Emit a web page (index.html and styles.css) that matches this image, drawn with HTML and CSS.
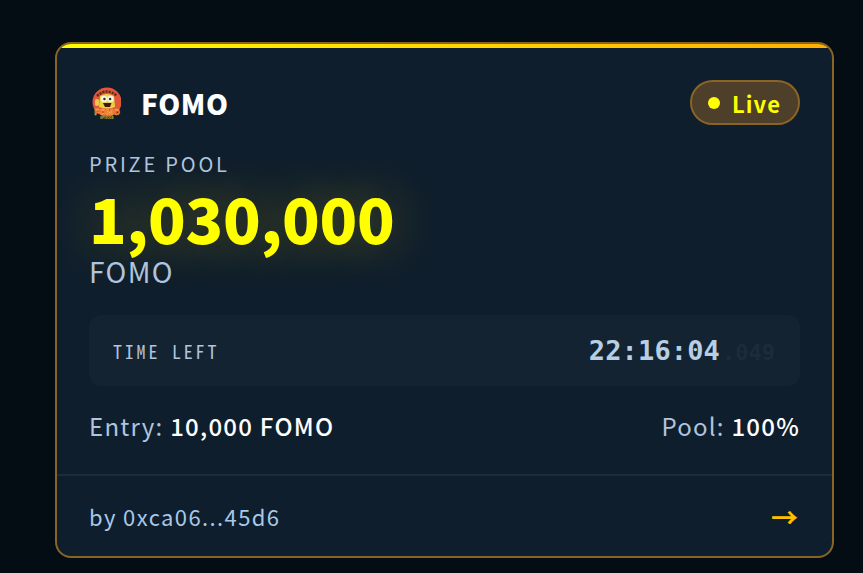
FILE: index.html
```html
<!DOCTYPE html>
<html lang="en">
<head>
<meta charset="utf-8">
<title>FOMO</title>
<link rel="stylesheet" href="styles.css">
</head>
<body>
<main class="card">
  <div class="accent"></div>
  <div class="content">
    <header class="head">
      <div class="brand">
        <svg class="logo" viewBox="-2 -1 32 32" aria-hidden="true">
          <circle cx="16" cy="14" r="14.5" fill="#e0573a"/>
          <path d="M6 8 Q16 -1 26 8" fill="none" stroke="#5e2a1a" stroke-width="2.4" stroke-dasharray="2.2 1"/>
          <path d="M9 8 Q16 4 23 8 L24 19 Q16 22 8 19 Z" fill="#e8d23e"/>
          <rect x="4" y="11" width="4" height="7" rx="1.8" fill="#f0c84c"/>
          <circle cx="13" cy="11" r="3.3" fill="#f5f3e2"/>
          <circle cx="19.5" cy="11" r="3.3" fill="#f5f3e2"/>
          <circle cx="13.4" cy="11" r="1.2" fill="#26301f"/>
          <circle cx="19.1" cy="11" r="1.2" fill="#26301f"/>
          <path d="M12 15h8.5l-1.5 4h-5z" fill="#3d1712"/>
          <text class="logo-word" x="16" y="26.5">FOMO</text>
          <text class="logo-sub" x="16" y="30.5">EPISODE</text>
        </svg>
        <h1 class="name">FOMO</h1>
      </div>
      <div class="badge"><span class="dot"></span>Live</div>
    </header>

    <section class="prize">
      <div class="prize-label">PRIZE POOL</div>
      <div class="prize-value">1,030,000</div>
      <div class="prize-unit">FOMO</div>
    </section>

    <section class="timer">
      <span class="timer-label">TIME LEFT</span>
      <span class="timer-value">22:16:04<span class="timer-ms">.049</span></span>
    </section>

    <section class="stats">
      <div>Entry: <strong>10,000 FOMO</strong></div>
      <div>Pool: <strong>100%</strong></div>
    </section>
  </div>
  <footer class="foot">
    <span class="by">by 0xca06...45d6</span>
    <span class="arrow">→</span>
  </footer>
</main>
</body>
</html>
```
FILE: styles.css
```css
* { box-sizing: border-box; }
body {
  margin: 0;
  height: 573px;
  overflow: hidden;
  padding: 42px 29px 0 55px;
  background: #040c14;
  font-family: "Noto Sans CJK SC", "Noto Sans", sans-serif;
  color: #fff;
}
.card {
  width: 779px;
  height: 516px;
  border: 2px solid #8a6424;
  border-radius: 16px;
  background: #0f1e2c;
  overflow: hidden;
}
.accent {
  height: 4px;
  margin: 0 -2px;
  background: linear-gradient(90deg, #ffff00, #ffb000);
}
.content { padding: 32px 32px 0 32px; height: 428px; border-bottom: 2px solid #1c2c3a; }
.head { display: flex; justify-content: space-between; align-items: center; height: 45px; }
.brand { display: flex; align-items: center; gap: 20px; }
.logo { width: 32px; height: 32px; display: block; }
.logo-word { font: 900 8.5px "Liberation Sans", sans-serif; fill: #f2502c; stroke: #f8d24a; stroke-width: .35px; text-anchor: middle; }
.logo-sub { font: 700 3px "Liberation Sans", sans-serif; fill: #d8b23a; text-anchor: middle; }
.name { margin: 0; font-size: 28px; font-weight: 900; line-height: 1; letter-spacing: .6px; }
.badge {
  display: flex; align-items: center; gap: 12px;
  width: 110px; height: 45px; padding: 0 16px;
  border: 2px solid #8a6424; border-radius: 23px;
  background: #4d3f2a; color: #ffff00;
  font-size: 22px; font-weight: 700; letter-spacing: 1.1px;
}
.dot { flex: none; width: 12px; height: 12px; border-radius: 50%; background: #ffff00; }
.prize { margin-top: 24px; }
.prize-label { font-size: 20px; line-height: 30px; letter-spacing: 2.8px; color: #b0c4de; }
.prize-value {
  font-size: 62px; font-weight: 900; line-height: 64px; margin-top: 6px; color: #ffff00;
  letter-spacing: -.25px;
  text-shadow: 0 0 50px rgba(255, 215, 0, .32);
}
.prize-unit { font-size: 28px; line-height: 36px; margin-top: 4px; color: #b0c4de; letter-spacing: 1.4px; }
.timer {
  display: flex; justify-content: space-between; align-items: center;
  height: 71px; margin-top: 26px; padding: 0 25px 0 24px;
  border-radius: 12px; background: #142331;
}
.timer-label { font-family: "Noto Sans Mono CJK SC", monospace; font-size: 18px; letter-spacing: 2.8px; color: #b0c4de; }
.timer-value { font-family: "DejaVu Sans Mono", monospace; font-size: 27px; font-weight: 700; letter-spacing: .15px; color: #b8cee2; }
.timer-ms { font-size: 22px; margin-left: 2px; letter-spacing: 0; color: #1c2c39; }
.stats { display: flex; justify-content: space-between; margin-top: 22px; font-size: 24px; line-height: 36px; letter-spacing: 1.25px; color: #b0c4de; }
.stats strong { color: #fff; font-weight: 500; }
.foot { display: flex; justify-content: space-between; align-items: center; height: 80px; padding: 0 34px 0 32px; }
.by { font-size: 22px; color: #a8c8e8; letter-spacing: 1.4px; }
.arrow { font-size: 27px; font-weight: 700; line-height: 1; color: #ffc000; }
```
